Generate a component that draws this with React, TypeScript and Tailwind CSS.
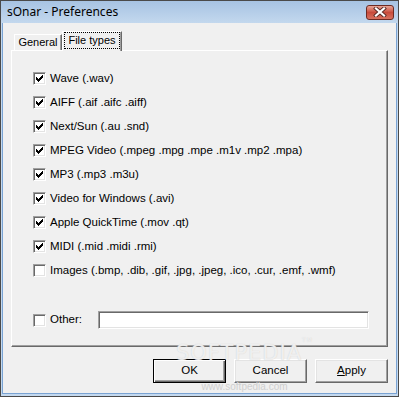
import React from 'react';

const fileTypes = [
  { label: 'Wave (.wav)', checked: true },
  { label: 'AIFF (.aif .aifc .aiff)', checked: true },
  { label: 'Next/Sun (.au .snd)', checked: true },
  { label: 'MPEG Video (.mpeg .mpg .mpe .m1v .mp2 .mpa)', checked: true },
  { label: 'MP3 (.mp3 .m3u)', checked: true },
  { label: 'Video for Windows (.avi)', checked: true },
  { label: 'Apple QuickTime (.mov .qt)', checked: true },
  { label: 'MIDI (.mid .midi .rmi)', checked: true },
  { label: 'Images (.bmp, .dib, .gif, .jpg, .jpeg, .ico, .cur, .emf, .wmf)', checked: false },
];

// classic 7x7 check glyph, pixel by pixel
const checkPixels = [
  '......#',
  '.....##',
  '#...###',
  '##.###.',
  '#####..',
  '.###...',
  '..#....',
];

function CheckBox({ checked }: { checked: boolean }) {
  return (
    <span className="block w-[13px] h-[13px] shrink-0 bg-white border border-t-[#a0a0a0] border-l-[#a0a0a0] border-r-white border-b-white shadow-[inset_1px_1px_0_#696969,inset_-1px_-1px_0_#e3e3e3]">
      {checked && (
        <svg width="7" height="7" viewBox="0 0 7 7" shapeRendering="crispEdges" className="block ml-[2px] mt-[2px]">
          {checkPixels.map((row, y) =>
            row.split('').map((c, x) =>
              c === '#' ? <rect key={`${x}-${y}`} x={x} y={y} width="1" height="1" fill="#000" /> : null
            )
          )}
        </svg>
      )}
    </span>
  );
}

function Button({ children, isDefault }: { children: React.ReactNode; isDefault?: boolean }) {
  return (
    <button
      className={
        isDefault
          ? 'w-[73px] h-[24px] bg-[#f0f0f0] border border-black shadow-[inset_1px_1px_0_#fff,inset_-1px_-1px_0_#696969,inset_-2px_-2px_0_#a0a0a0] text-[11.5px] text-black'
          : 'w-[73px] h-[24px] bg-[#f0f0f0] border border-t-white border-l-white border-r-[#696969] border-b-[#696969] shadow-[inset_-1px_-1px_0_#a0a0a0,inset_1px_1px_0_#e3e3e3] text-[11.5px] text-black'
      }
    >
      {children}
    </button>
  );
}

export default function App() {
  return (
    <div className="relative w-[399px] h-[397px] flex flex-col bg-[#c4d9ef] border border-[#4a4a4a] font-['Liberation_Sans',Arial,sans-serif] text-[11px] text-black overflow-hidden">
      {/* title bar */}
      <div className="h-[22px] shrink-0 flex items-center justify-between pl-[6px] pr-[4px] bg-gradient-to-b from-[#a7c3e3] to-[#c3d8ee]">
        <span className="font-['Noto_Sans',sans-serif] text-[12px] text-black leading-none">sOnar - Preferences</span>
        <span className="w-[28px] h-[15px] rounded-[3px] border border-[#6d2a22] bg-gradient-to-b from-[#e7a597] via-[#c84b3b] to-[#d8715f] flex items-center justify-center">
          <svg width="14" height="10" viewBox="0 0 14 10">
            <path d="M3 1.5 L11 8.5 M11 1.5 L3 8.5" stroke="#5a2a24" strokeWidth="4" strokeLinecap="square" />
            <path d="M3 1.5 L11 8.5 M11 1.5 L3 8.5" stroke="#fff" strokeWidth="2.2" strokeLinecap="square" />
          </svg>
        </span>
      </div>

      {/* client area */}
      <div className="flex-1 mx-[1px] mb-[2px] border-x border-b border-[#7aa3d3] bg-[#f0f0f0] flex flex-col px-[8px] pt-[9px]">
        {/* tabs */}
        <div className="flex items-end h-[19px] pl-[3px] relative z-10">
          <div className="w-[48px] h-[16px] mb-[1px] bg-[#f0f0f0] border-t border-l border-white border-r border-r-[#696969] shadow-[inset_-1px_0_0_#a0a0a0] flex items-center justify-center pb-[1px]">
            General
          </div>
          <div className="w-[60px] h-[20px] bg-[#f0f0f0] border-t border-l border-white border-r border-r-[#696969] shadow-[inset_-1px_0_0_#a0a0a0] flex items-start px-[1px]">
            <span className="w-full h-[17px] border border-dotted border-black flex items-center justify-center">
              File types
            </span>
          </div>
        </div>

        {/* tab panel */}
        <div className="h-[297px] -mt-[1px] border border-t-white border-l-white border-r-[#696969] border-b-[#696969] shadow-[inset_-1px_-1px_0_#a0a0a0] flex flex-col pl-[21px] pr-[18px] pt-[21px] text-[11.5px]">
          <div className="flex flex-col gap-[11px]">
            {fileTypes.map((t) => (
              <label key={t.label} className="flex items-center h-[13px] gap-[4px] whitespace-nowrap">
                <CheckBox checked={t.checked} />
                <span className="leading-none">{t.label}</span>
              </label>
            ))}
          </div>

          <div className="flex items-center mt-[34px] h-[18px]">
            <CheckBox checked={false} />
            <span className="ml-[4px] w-[48px] leading-none">Other:</span>
            <span className="block w-[271px] h-[18px] bg-white border border-t-[#a0a0a0] border-l-[#a0a0a0] border-r-white border-b-white shadow-[inset_1px_1px_0_#696969,inset_-1px_-1px_0_#e3e3e3]" />
          </div>
        </div>

        {/* buttons */}
        <div className="flex justify-end gap-[8px] mt-[12px]">
          <Button isDefault>OK</Button>
          <Button>Cancel</Button>
          <Button>
            <span className="underline underline-offset-1">A</span>pply
          </Button>
        </div>
      </div>

      {/* watermark */}
      <div className="absolute left-[175px] top-[342px] pointer-events-none select-none flex flex-col items-center">
        <span className="font-['DejaVu_Sans',sans-serif] text-[21px] leading-none tracking-[1px] text-white/70 [text-shadow:0_0_1px_#c8c8c8]">
          SOFTPEDIA<sup className="text-[6px] align-top">TM</sup>
        </span>
        <span className="font-['Liberation_Sans',sans-serif] text-[10px] leading-none mt-[18px] text-[#cfcfcf]">www.softpedia.com</span>
      </div>
    </div>
  );
}
